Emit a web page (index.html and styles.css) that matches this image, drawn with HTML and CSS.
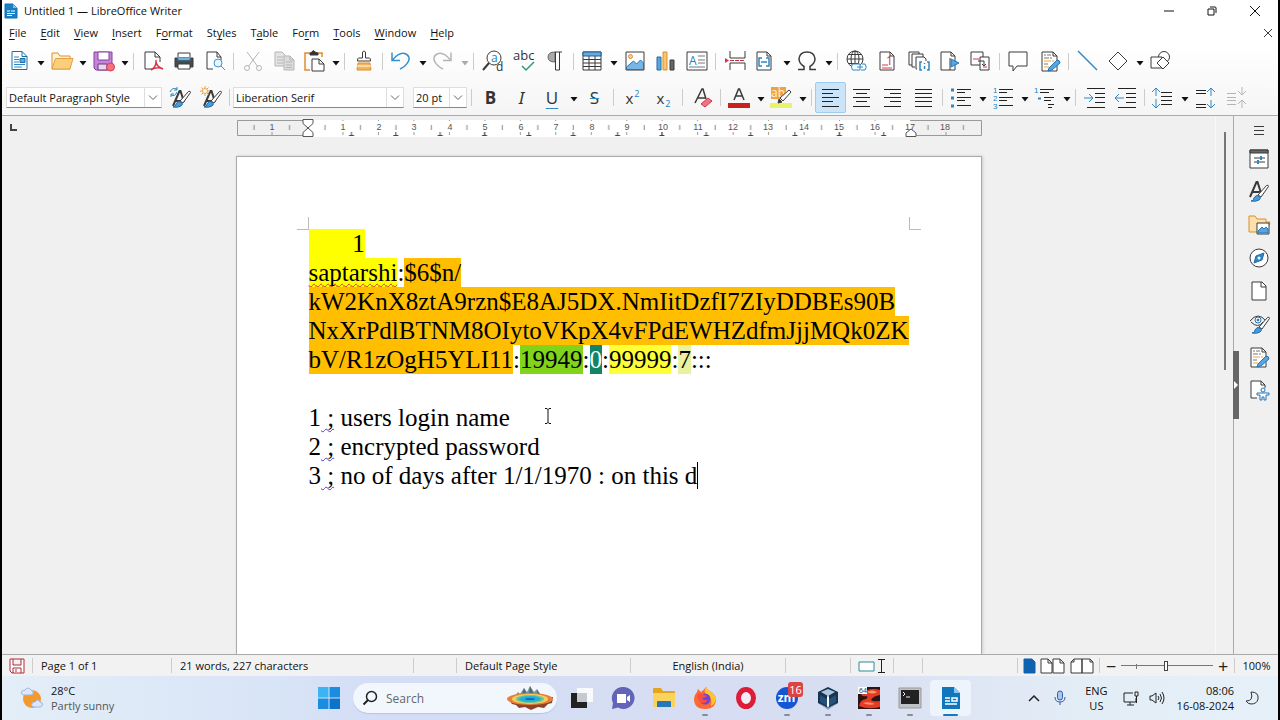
FILE: index.html
```html
<!DOCTYPE html>
<html lang="en">
<head>
<meta charset="utf-8">
<title>Untitled 1 — LibreOffice Writer</title>
<link rel="stylesheet" href="styles.css">
</head>
<body>
<svg class="defs" aria-hidden="true">
  <defs>
    <symbol id="arrow" viewBox="0 0 8 5"><path d="M0.5 0h7L4 4.5z" fill="currentColor" stroke="none"/></symbol>
    <symbol id="chev" viewBox="0 0 10 6"><path d="M1 1l4 4 4-4" stroke="#666"/></symbol>
    <symbol id="brush" viewBox="0 0 24 24">
      <path d="M11 15 19.500 5.500q2-1 2 1L14 17z" fill="#fff"/>
      <path d="M4 21q3 0 3-3 2-4 5-2 3 2 0 4-3 2-8 1z" fill="#4a9bd8" stroke="#1e6fae"/>
    </symbol>
    <symbol id="styleA" viewBox="0 0 24 24"><path d="M4 18 10.500 3h1L15 14M6.500 13h7" stroke-width="2"/></symbol>
    <symbol id="editdoc" viewBox="0 0 24 24">
      <path d="M4 3h11l4 4v15H4z" fill="#fff"/><path d="M15 3v4h4"/>
      <path d="M6 6h2m1 0h4M6 9h5m1 0h2M6 15h4" stroke="#777"/><path d="M6 12h7m1 0h2M6 18h5" stroke="#e8a33d"/>
      <path d="m11 19 8-8q3 0 3 3l-8 7-4 1z" fill="#5ba5df" stroke="#2375b9"/>
    </symbol>
  </defs>
</svg>
<div class="window">
  <header class="titlebar">
    <svg class="app-icon" viewBox="0 0 14 16"><path d="M1 1h8l4 4v10H1z" fill="#1681c4" stroke="#1173b5"/><path d="M9 1v4h4z" fill="#7cc3ee" stroke="none"/><path d="M3 8h3m1 0h4M3 10.500h8M3 12.500h5" stroke="#fff"/></svg>
    <h1>Untitled 1 — LibreOffice Writer</h1>
    <div class="window-buttons">
      <button aria-label="Minimize"><svg viewBox="0 0 12 12"><path d="M1 6h10"/></svg></button>
      <button aria-label="Restore"><svg viewBox="0 0 12 12"><path d="M2 4h6v6H2zM4 2h5q1 0 1 1v5"/></svg></button>
      <button aria-label="Close"><svg viewBox="0 0 12 12"><path d="m1 1 10 10M11 1 1 11"/></svg></button>
    </div>
  </header>

  <nav class="menubar">
    <button><u>F</u>ile</button><button><u>E</u>dit</button><button><u>V</u>iew</button><button><u>I</u>nsert</button><button>F<u>o</u>rmat</button><button>St<u>y</u>les</button><button>T<u>a</u>ble</button><button>Fo<u>r</u>m</button><button><u>T</u>ools</button><button><u>W</u>indow</button><button><u>H</u>elp</button>
    <button class="close-doc" aria-label="Close document"><svg viewBox="0 0 8 8"><path d="m0 0 8 8M8 0 0 8"/></svg></button>
  </nav>

  <div class="toolbar standard">
    <div class="split"><button aria-label="New"><svg viewBox="0 0 24 24"><path d="M5 2.500h10l5 5v13H5z" fill="#fff" stroke="#1c6ea4"/><path d="M15 2.500v5h5" stroke="#1c6ea4"/><path d="M7 8h5m-5 2.500h5M7 13h5m-5 2.500h11M7 18h8" stroke="#2d88c3"/><path d="M13 9.500h5v4h-5z" fill="#5aa8dc" stroke="#1c6ea4"/></svg></button><button class="drop" aria-label="New options"><svg><use href="#arrow"/></svg></button></div>
    <div class="split"><button aria-label="Open"><svg viewBox="0 0 24 24"><path d="M3 20V4h6l2 3h10v13z" fill="#fff3d6" stroke="#e08d2c"/><path d="M3 20 6.500 9.500H24L21 20z" fill="#f9cf7c" stroke="#e3a03f"/></svg></button><button class="drop" aria-label="Open options"><svg><use href="#arrow"/></svg></button></div>
    <div class="split"><button aria-label="Save"><svg viewBox="0 0 24 24"><path d="M3 3h18v18H5l-2-2z" fill="#c583dc" stroke="#85409b"/><path d="M7 3h11v8H7z" fill="#fff" stroke="#85409b"/><path d="M7 15h9v6H7z" fill="#e9d5ef" stroke="#6b3a7c"/><circle cx="19.500" cy="18" r="4" fill="#f27080" stroke="#d63d50"/></svg></button><button class="drop" aria-label="Save options"><svg><use href="#arrow"/></svg></button></div>
    <span class="sep"></span>
    <button aria-label="Export as PDF"><svg viewBox="0 0 24 24"><path d="M11 20H4V3h10l5 5v5" fill="#fff"/><path d="M14 3v5h5"/><path d="M10 21q5-3 5-8 0-3 0 0 1 5 7 7-6-3-12 1z" stroke="#d8344b" stroke-width="1.500"/></svg></button>
    <button aria-label="Print"><svg viewBox="0 0 24 24"><path d="M3 9h18v9H3z" fill="#4a4a4a"/><path d="M6 8V4h12v4" fill="#fff"/><path d="M6 9h12v2H6z" fill="#b8daf2" stroke="#2d88c3"/><path d="M6 15h12v5H6z" fill="#fff"/></svg></button>
    <button aria-label="Print preview"><svg viewBox="0 0 24 24"><path d="M10 20H4V3h10l4 5v3" fill="#fff"/><path d="M14 3v5h4"/><circle cx="15" cy="14" r="4" fill="#e9f5fc" stroke="#3f96cc"/><path d="m18 17 4 4" stroke="#3f96cc"/></svg></button>
    <span class="sep"></span>
    <button class="off" aria-label="Cut"><svg viewBox="0 0 24 24"><path d="M6 3 17 18M18 3 7 18"/><circle cx="6" cy="19" r="2.500"/><circle cx="18" cy="19" r="2.500"/></svg></button>
    <button class="off" aria-label="Copy"><svg viewBox="0 0 24 24"><path d="M3 3h7l3 3v11H3z" fill="#e4e4e4"/><path d="M5 8h6M5 11h6M5 14h6"/><path d="M12 7h6l4 4v10H12z" fill="#dcdcdc"/><path d="M18 7v4h4M14 13h6m-6 3h6m-6 2.500h6"/></svg></button>
    <div class="split"><button aria-label="Paste"><svg viewBox="0 0 24 24"><path d="M8 21H3V4h5m8 0h4v4" stroke="#e08d2c" stroke-width="1.500"/><path d="M8 6V4l2-1q1-3 3 0l3 1v2z" fill="#333"/><path d="M10 10h7l5 5v7H10z" fill="#fff"/><path d="M17 10v5h5"/></svg></button><button class="drop" aria-label="Paste options"><svg><use href="#arrow"/></svg></button></div>
    <span class="sep"></span>
    <button aria-label="Clone formatting"><svg viewBox="0 0 24 24"><path d="M10.500 9V3q1.500-2 3 0v6h4q1 0 1 3h-13q0-3 1-3z" fill="#fff"/><path d="M6 14h12l1 7H5z" fill="#f5b45a" stroke="#e08d2c"/><path d="M5 17h14" stroke="#fff"/></svg></button>
    <span class="sep"></span>
    <div class="split"><button aria-label="Undo"><svg viewBox="0 0 24 24"><path d="M3 3.500v8h8M3.500 11Q11 2 17 5q5 3 2 8-2 4-8 7" stroke="#348fce" stroke-width="1.500"/></svg></button><button class="drop" aria-label="Undo options"><svg><use href="#arrow"/></svg></button></div>
    <div class="split off"><button aria-label="Redo"><svg viewBox="0 0 24 24"><path d="M20 3.500v8h-8M19.500 11Q12 2 6 5q-5 3-2 8 2 4 8 7" stroke-width="1.500"/></svg></button><button class="drop" aria-label="Redo options"><svg><use href="#arrow"/></svg></button></div>
    <span class="sep"></span>
    <button aria-label="Find and replace"><svg viewBox="0 0 24 24"><circle cx="13" cy="9" r="7" fill="#fff"/><path d="m8 14-6 7" stroke-width="2"/><text x="10" y="13" class="glyph blue s12">a</text><text x="15" y="22" class="glyph s12">d</text></svg></button>
    <button aria-label="Spelling"><svg viewBox="0 0 24 24"><text x="1" y="11" class="glyph s13">abc</text><path d="m10 17 4 4 8-8" stroke="#2f9c6b" stroke-width="1.500"/></svg></button>
    <button aria-label="Formatting marks"><svg viewBox="0 0 24 24"><path d="M12 13Q5 13 5 8t7-5z" fill="#aaa" stroke="#666"/><path d="M12 3h7M12.500 3v18h4V3"/></svg></button>
    <span class="sep"></span>
    <div class="split"><button aria-label="Insert table"><svg viewBox="0 0 24 24"><path d="M3 3h18v18H3z" fill="#fff"/><path d="M3 3h18v4H3z" fill="#69a9dc" stroke="#1f5f94"/><path d="M3 10.500h18M3 14h18M3 17.500h18M9 7v14m6-14v14"/></svg></button><button class="drop" aria-label="Table options"><svg><use href="#arrow"/></svg></button></div>
    <button aria-label="Insert image"><svg viewBox="0 0 24 24"><path d="M3 3h18v18H3z" fill="#fff"/><circle cx="7.500" cy="7.500" r="2" fill="#fbd08a" stroke="#e08d2c"/><path d="m3.500 18 7-6 3 3 4-4 3 3v6.500h-17z" fill="#76b6e6" stroke="#2375b9"/></svg></button>
    <button aria-label="Insert chart"><svg viewBox="0 0 24 24"><path d="M3 8h4v13H3z" fill="#5ba5df" stroke="#1f6cab"/><path d="M9 3h4v18H9z" fill="#fbc56e" stroke="#d98f30"/><path d="M16 11h4v10h-4z" fill="#666"/></svg></button>
    <button aria-label="Insert text box"><svg viewBox="0 0 24 24"><path d="M2 3h20v18H2z" fill="#fff"/><text x="4" y="16" class="glyph blue s12">A</text><path d="M13 7h7m-7 4h7m-7 3h7M4 18h16" stroke="#777"/></svg></button>
    <span class="sep"></span>
    <button aria-label="Page break"><svg viewBox="0 0 24 24"><path d="M7 2v7h15V2M7 21v-7h15v7" fill="#fff"/><path d="M7 11.500h15" stroke="#c2303d" stroke-dasharray="4 1"/><path d="m2 9 4 2.500L2 14z" fill="#d8344b" stroke="none"/></svg></button>
    <div class="split"><button aria-label="Insert field"><svg viewBox="0 0 24 24"><path d="M4 3h10l4 4v14H4z" fill="#fff"/><path d="M14 3v4h4"/><path d="M9 9H6v8h3m4-8h3v8h-3m-5-4h6" stroke="#2d88c3" stroke-width="1.500"/></svg></button><button class="drop" aria-label="Field options"><svg><use href="#arrow"/></svg></button></div>
    <div class="split"><button aria-label="Special character"><svg viewBox="0 0 24 24"><path d="M3 20.500h6v-3q-5-3-5-8Q5 3 12 3t8 6.500q0 5-5 8v3h6" stroke-width="1.500"/></svg></button><button class="drop" aria-label="Character options"><svg><use href="#arrow"/></svg></button></div>
    <span class="sep"></span>
    <button aria-label="Hyperlink"><svg viewBox="0 0 24 24"><circle cx="10" cy="10" r="8" fill="#fff"/><path d="M2 10h16M10 2v16M4 5.500h12M4 14.500h9"/><ellipse cx="10" cy="10" rx="4" ry="8"/><path d="M10 15h5v6H7.500q-2-3 0-6zm7 0h3q2.500 3 0 6h-4m-4-3h6" fill="#fff" stroke="#2d88c3"/></svg></button>
    <button aria-label="Footnote"><svg viewBox="0 0 24 24"><path d="M4 3h10l4 4v14H4z" fill="#fff"/><path d="M14 3v4h4"/><path d="M6 16h6M6 19h10" stroke="#d8344b"/><text x="10" y="16" class="glyph red s12">1</text></svg></button>
    <button aria-label="Index entry"><svg viewBox="0 0 24 24"><path d="M5 16H2V3h10v2M8 18H5V5h11v3m-6 12H9V8h8l2 2v2"/><path d="M15 13h-2v8h2m5-8h2v8h-2m-2.500-4v3m0-6v1" stroke="#2d88c3" stroke-width="1.500"/></svg></button>
    <button aria-label="Bookmark"><svg viewBox="0 0 24 24"><path d="M3 3h10l4 4v14H3z" fill="#fff"/><path d="M13 3v4h4M12 9v12"/><path d="m13 10 8 4-8 4z" fill="#5ba5df" stroke="#2375b9"/></svg></button>
    <button aria-label="Cross-reference"><svg viewBox="0 0 24 24"><path d="M2 3h12v13H2z" fill="#fff"/><path d="M11 8h9v13h-9z" fill="#fff"/><path d="M4 10h6m4 8h4" stroke="#d8344b"/><path d="M9 12h6v4m-2-1 2 2 2-2"/></svg></button>
    <span class="sep"></span>
    <button aria-label="Comment"><svg viewBox="0 0 24 24"><path d="M2 3h18v14H10l-4 5v-5H2z" fill="#fff"/></svg></button>
    <button aria-label="Track changes"><svg><use href="#editdoc"/></svg></button>
    <span class="sep"></span>
    <button aria-label="Line"><svg viewBox="0 0 24 24"><path d="m2 2 19 19" stroke="#2d88c3" stroke-width="1.500"/></svg></button>
    <div class="split"><button aria-label="Basic shapes"><svg viewBox="0 0 24 24"><path d="m12 3 9 9-9 9-9-9z" fill="#fff"/></svg></button><button class="drop" aria-label="Shape options"><svg><use href="#arrow"/></svg></button></div>
    <button aria-label="Show draw functions"><svg viewBox="0 0 24 24"><circle cx="15" cy="8" r="5.500" fill="#fff"/><path d="M2 8h11v11H2z" fill="#fff"/><path d="m14 8 6 6-6 6-6-6z" fill="#fff"/></svg></button>
  </div>

  <div class="toolbar formatting">
    <div class="combo style"><select aria-label="Paragraph style"><option>Default Paragraph Style</option></select><svg><use href="#chev"/></svg></div>
    <button aria-label="Update style"><svg viewBox="0 0 24 24"><use href="#styleA" x="1" y="2"/><use href="#brush" x="1"/><path d="M2 6q2-5 7-3m0-2v3H6M9 6q-2 5-6 3m0 2V8h3" stroke="#2d88c3"/></svg></button>
    <button aria-label="New style"><svg viewBox="0 0 24 24"><use href="#styleA" x="1" y="2"/><use href="#brush" x="1"/><circle cx="6" cy="5" r="2.500" fill="#fff" stroke="#e8a33d"/><path d="M6 0v2m0 6v2M1 5h2m6 0h2M2.500 1.500 4 3m4 4 1.500 1.500M9.500 1.500 8 3M4 7 2.500 8.500" stroke="#e8a33d"/></svg></button>
    <span class="sep"></span>
    <div class="combo font"><select aria-label="Font name"><option>Liberation Serif</option></select><svg><use href="#chev"/></svg></div>
    <div class="combo size"><select aria-label="Font size"><option>20 pt</option></select><svg><use href="#chev"/></svg></div>
    <span class="sep"></span>
    <button class="char bold">B</button>
    <button class="char italic">I</button>
    <div class="split"><button class="char under">U</button><button class="drop" aria-label="Underline options"><svg><use href="#arrow"/></svg></button></div>
    <button class="char strike">S</button>
    <span class="sep"></span>
    <button class="char script" aria-label="Superscript">x<sup>2</sup></button>
    <button class="char script" aria-label="Subscript">x<sub>2</sub></button>
    <span class="sep"></span>
    <button aria-label="Clear formatting"><svg viewBox="0 0 24 24"><path d="M5 17 12 3h1l3 10M8 12h7" stroke-width="1.500"/><path d="m11 18 7-6 4 3-7 6z" fill="#ef7581" stroke="#d8344b"/></svg></button>
    <span class="sep"></span>
    <div class="split"><button aria-label="Font colour"><svg viewBox="0 0 24 24"><path d="m7 14 4.500-11h1L17 14M9 10h6" stroke-width="1.500"/><path d="M1 17h22v5H1z" fill="#c9211e" stroke="none"/></svg></button><button class="drop" aria-label="Font colour options"><svg><use href="#arrow"/></svg></button></div>
    <div class="split"><button aria-label="Highlighting"><svg viewBox="0 0 24 24"><path d="M2 1h15v12H2z" fill="#f2a13c" stroke="none"/><text x="2" y="11" class="glyph pale s12">ab</text><path d="M1 17h22v5H1z" fill="#e8f26b" stroke="none"/><path d="M11 12 20 4l2 2-8 9z" fill="#fff"/><path d="m10 13 3 3-4 1z" fill="#333"/></svg></button><button class="drop" aria-label="Highlighting options"><svg><use href="#arrow"/></svg></button></div>
    <span class="sep"></span>
    <button class="pressed" aria-label="Align left"><svg class="bars" viewBox="0 0 24 24"><path d="M3 3.500h17M3 7.500h11M3 11.500h17M3 15.500h11M3 20.500h17"/></svg></button>
    <button aria-label="Align centre"><svg class="bars" viewBox="0 0 24 24"><path d="M3 3.500h17M6 7.500h11M3 11.500h17M6 15.500h11M3 20.500h17"/></svg></button>
    <button aria-label="Align right"><svg class="bars" viewBox="0 0 24 24"><path d="M3 3.500h17M9 7.500h11M3 11.500h17M9 15.500h11M3 20.500h17"/></svg></button>
    <button aria-label="Justify"><svg class="bars" viewBox="0 0 24 24"><path d="M3 3.500h17M3 7.500h17M3 11.500h17M3 15.500h17M3 20.500h17"/></svg></button>
    <span class="sep"></span>
    <div class="split"><button aria-label="Bullets"><svg class="bars" viewBox="0 0 24 24"><path d="M8 3.500h14M8 6.500h8M8 11.500h14M8 14.500h8M8 19.500h14"/><path d="M2 4h3M2 12h3M2 20h3" stroke="#2d88c3" stroke-width="3"/></svg></button><button class="drop" aria-label="Bullet options"><svg><use href="#arrow"/></svg></button></div>
    <div class="split"><button aria-label="Numbering"><svg class="bars" viewBox="0 0 24 24"><path d="M8 3.500h14M8 6.500h8M8 11.500h14M8 14.500h8M8 19.500h14"/><text x="2" y="7" class="glyph blue digit">1</text><text x="2" y="15" class="glyph blue digit">2</text><text x="2" y="23" class="glyph blue digit">3</text></svg></button><button class="drop" aria-label="Numbering options"><svg><use href="#arrow"/></svg></button></div>
    <div class="split"><button aria-label="Outline"><svg class="bars" viewBox="0 0 24 24"><path d="M7 3.500h14M7 6.500h9M11 11.500h10M11 14.500h7M15 18.500h6M15 21.500h4"/><text x="1" y="7" class="glyph blue digit">1</text><path d="M5 12.500h3" stroke="#2d88c3" stroke-width="2"/></svg></button><button class="drop" aria-label="Outline options"><svg><use href="#arrow"/></svg></button></div>
    <span class="sep"></span>
    <button aria-label="Increase indent"><svg class="bars" viewBox="0 0 24 24"><path d="M4 2.500h18M12 7.500h10M12 11.500h10M12 16.500h10M4 21.500h18"/><path d="M1 12h9M6 8l4 4-4 4" stroke="#2d88c3"/></svg></button>
    <button aria-label="Decrease indent"><svg class="bars" viewBox="0 0 24 24"><path d="M4 2.500h18M12 7.500h10M12 11.500h10M12 16.500h10M4 21.500h18"/><path d="M1 12h9M5 8l-4 4 4 4" stroke="#2d88c3"/></svg></button>
    <span class="sep"></span>
    <div class="split"><button aria-label="Line spacing"><svg class="bars" viewBox="0 0 24 24"><path d="M10 6.500h11M10 10.500h11M10 14.500h11M10 18.500h11"/><path d="M5 2v8M1 6l4-4 4 4M5 13v9m-4-4 4 4 4-4" stroke="#2d88c3"/></svg></button><button class="drop" aria-label="Spacing options"><svg><use href="#arrow"/></svg></button></div>
    <button aria-label="Increase paragraph spacing"><svg class="bars" viewBox="0 0 24 24"><path d="M2 4.500h10M2 7.500h10M2 18.500h10M2 21.500h10"/><path d="M17 2v8m-4-4 4-4 4 4m-4 8v8m-4-4 4 4 4-4" stroke="#2d88c3"/></svg></button>
    <button class="off" aria-label="Decrease paragraph spacing"><svg class="bars" viewBox="0 0 24 24"><path d="M2 7.500h9M2 11.500h9M2 14.500h9M2 18.500h9M17 1v8m-4-4 4 4 4-4m-4 9v8m-4-4 4-4 4 4"/></svg></button>
  </div>

  <main class="workspace">
    <div class="canvas">
      <svg class="tab-kind" viewBox="0 0 8 8"><path d="M1 0v6h6" stroke="#444" stroke-width="2"/></svg>
      <svg class="ruler" viewBox="0 0 746 20">
        <defs>
          <pattern id="half" x="71" width="35.470" height="20" patternUnits="userSpaceOnUse"><path d="M18 7v5" stroke="#888"/><path d="M0.500 0v3M0.500 14v3" stroke="#999"/></pattern>
          <pattern id="stops" x="93" y="14" width="44.350" height="6" patternUnits="userSpaceOnUse"><path d="M20 3.500h5M22.500 0v3" stroke="#444"/></pattern>
        </defs>
        <path d="M1.500 2.500h744v15H1.500z" fill="#f0f0f0" stroke="#999"/>
        <path d="M72 2h603v17H72z" fill="#fff" stroke="none"/>
        <path d="M2 2h742v16H2z" fill="url(#half)" stroke="none"/>
        <path d="M76 14h594v5H76z" fill="url(#stops)" stroke="none"/>
        <g class="numbers">
          <text x="36" y="12">1</text><text x="107" y="12">1</text><text x="143" y="12">2</text><text x="178" y="12">3</text><text x="214" y="12">4</text><text x="249" y="12">5</text><text x="285" y="12">6</text><text x="320" y="12">7</text><text x="356" y="12">8</text><text x="391" y="12">9</text><text x="427" y="12">10</text><text x="462" y="12">11</text><text x="497" y="12">12</text><text x="532" y="12">13</text><text x="568" y="12">14</text><text x="603" y="12">15</text><text x="639" y="12">16</text><text x="674" y="12">17</text><text x="709" y="12">18</text>
        </g>
        <path d="M67 1.500h10v4l-5 4.500 5 4.500v4H67v-4l5-4.500-5-4.500zM675 11l5 4v3.500h-10V15z" fill="#fff" stroke="#555"/>
      </svg>
      <article class="page">
        <span class="crop left"></span><span class="crop right"></span>
        <p><mark class="yellow">       1</mark></p>
        <p><mark class="yellow"><span class="misspelt">saptarshi</span></mark>:<mark class="orange">$6$n/<br>kW2KnX8ztA9rzn$E8AJ5DX.NmIitDzfI7ZIyDDBEs90B<br>NxXrPdlBTNM8OIytoVKpX4vFPdEWHZdfmJjjMQk0ZK<br>bV/R1zOgH5YLI11</mark>:<mark class="green">19949</mark>:<mark class="teal">0</mark>:<mark class="lemon">99999</mark>:<mark class="lime">7</mark>:::</p>
        <p><br></p>
        <p>1<span class="grammar"> ;</span> users login name</p>
        <p>2<span class="grammar"> ;</span> encrypted password</p>
        <p>3<span class="grammar"> ;</span> no of days after 1/1/1970 : on this d<span class="caret"></span></p>
        <svg class="pointer" viewBox="0 0 8 16"><path d="M1 0.500h2l1 1 1-1h2M4 1v14M1 15.500h2l1-1 1 1h2" stroke="#111"/></svg>
      </article>
    </div>
    <div class="scroll"><span></span></div>
    <aside class="sidebar">
      <button class="grip" aria-label="Collapse sidebar"><svg viewBox="0 0 6 8"><path d="M1 0l4 4-4 4z" fill="#fff" stroke="none"/></svg></button>
      <button class="settings" aria-label="Sidebar settings"><svg viewBox="0 0 24 24"><path d="M7 8.500h10M7 12.500h10M7 16.500h10"/></svg></button>
      <button aria-label="Properties"><svg viewBox="0 0 24 24"><path d="M3 3h18v18H3z" fill="#fff"/><path d="M3 3h18v3H3z" fill="#666"/><path d="M7 11h11M7 15h11"/><path d="M14 9v4m-3 0v4" stroke="#2d88c3" stroke-width="2"/></svg></button>
      <button aria-label="Styles"><svg viewBox="0 0 24 24"><use href="#styleA" x="-1" y="-1"/><use href="#brush"/></svg></button>
      <button aria-label="Gallery"><svg viewBox="0 0 24 24"><path d="M2 19V3h6l2 3h9v3h4l-3 10z" fill="#fbe0ab" stroke="#e08d2c"/><path d="M10 10h12v11H10z" fill="#fff"/><path d="m11 18 4-4 2 2 2-2 2 2v4H11z" fill="#5ba5df" stroke="#2375b9"/></svg></button>
      <button aria-label="Navigator"><svg viewBox="0 0 24 24"><circle cx="12" cy="12" r="9" fill="#fff"/><path d="M17 7 15 14l-8 3 2-7z" fill="#2d88c3" stroke="#1f6cab"/><circle cx="12" cy="12" r="1.500" fill="#fff" stroke="none"/></svg></button>
      <button aria-label="Page"><svg viewBox="0 0 24 24"><path d="M5 3h10l4 4v14H5z" fill="#fff"/><path d="M14 3v5h5"/></svg></button>
      <button aria-label="Style inspector"><svg viewBox="0 0 24 24"><path d="M3 9q8-10 16 0M4 10q7 7 12 0"/><circle cx="11" cy="8" r="3" fill="#fff" stroke="#2375b9"/><circle cx="11" cy="8" r="1" fill="#2375b9" stroke="#2375b9"/><use href="#brush" x="1"/></svg></button>
      <button aria-label="Manage changes"><svg><use href="#editdoc"/></svg></button>
      <button aria-label="Accessibility check"><svg viewBox="0 0 24 24"><path d="M10 20H4V3h10l4 4v3" fill="#fff"/><path d="M14 3v4h4"/><circle cx="16" cy="12" r="2" fill="#fff" stroke="#2375b9"/><path d="M10 15h12v2h-3v5h-2v-3h-2v3h-2v-5h-3z" fill="#fff" stroke="#2375b9"/></svg></button>
    </aside>
  </main>

  <footer class="statusbar">
    <span class="mid"><svg class="save-state" viewBox="0 0 16 16"><path d="M1 1h14v14H3l-2-2zM4 1v6h8V1M4 15v-5h8v5M7 11v3" stroke="#b02a37" fill="#fff"/></svg></span>
    <span>Page 1 of 1</span>
    <span>21 words, 227 characters</span>
    <span></span>
    <span>Default Page Style</span>
    <span class="mid">English (India)</span>
    <span></span>
    <span class="mid"><svg class="insert-state" viewBox="0 0 28 16"><path d="M1 4h15v9H1z" fill="#fff" stroke="#2b8a9c"/><path d="M20 1.500h7M23.500 1v14M20 14.500h7" stroke="#222"/></svg></span>
    <span></span>
    <span></span>
    <span class="mid views"><svg viewBox="0 0 72 16"><path d="M1 1h8l3 3v11H1z" fill="#0d63b0" stroke="#0d63b0"/><path d="M18 1h7l4 4v10H18zM30 1h7l4 4v10H30zM25 1v4h4M37 1v4h4M51 1h8v14H48V4zM59 1h8l3 3v11H59zM51 1v3h-3M67 1v3h3" fill="#fff"/></svg></span>
    <span class="mid zoom"><button aria-label="Zoom out">−</button><input type="range" min="0" max="100" value="49" aria-label="Zoom"><button aria-label="Zoom in">+</button></span>
    <span class="mid">100%</span>
  </footer>

  <div class="taskbar">
    <div class="weather">
      <svg viewBox="0 0 24 24"><circle cx="12" cy="13" r="9" fill="#f39a2e" stroke="none"/><path d="M3 9q-3-1-1-4 2-1 3-1 3-4 6 0 3 0 2 4-1 1-3 1zM13 21q-3-2 0-5 1 0 2 0 3-4 5 0 4 1 2 4-1 1-3 1z" fill="#dbe7fa" stroke="#9db5dd"/></svg>
      <div><strong>28°C</strong><span>Partly sunny</span></div>
    </div>
    <div class="apps">
      <button aria-label="Start"><svg viewBox="0 0 24 24"><g stroke="none" fill="#1a8de0"><path d="M1 1h10.500v10.500H1z" fill="#3bb5ef"/><path d="M12.500 1H23v10.500H12.500zM1 12.500h10.500V23H1z"/><path d="M12.500 12.500H23V23H12.500z" fill="#0d72c9"/></g></svg></button>
      <label class="search"><svg viewBox="0 0 16 16"><circle cx="9.500" cy="6.500" r="5" stroke="#222" stroke-width="1.500"/><path d="m6 10-4.500 4.500" stroke="#222" stroke-width="2"/></svg><input type="text" placeholder="Search" aria-label="Search"><svg class="spring" viewBox="0 0 48 24"><g stroke="none"><path d="M8 11 12 6l2 2 4-6 3 4 3-6 4 6 3-3 4 6 5 1v5H8z" fill="#7d939d"/><path d="M18 2 21 9H16zM24 0 28 9h-5zM31 4l4 6h-4z" fill="#4f6875"/><path d="M1 12 6 18l4 1 3 3 6-1 6 3 7-3 6 1 4-4 4-1 1-6z" fill="#8b4429"/><ellipse cx="24" cy="13" rx="23" ry="6" fill="#e8803c"/><ellipse cx="24" cy="13" rx="18" ry="5" fill="#f2cf56"/><ellipse cx="24" cy="13" rx="14" ry="4" fill="#63c994"/><ellipse cx="24" cy="13" rx="11" ry="3" fill="#24aee0"/><ellipse cx="24" cy="13" rx="5" ry="1" fill="#1668b8"/></g></svg></label>
      <button aria-label="Task view"><svg viewBox="0 0 24 24"><g stroke="none"><path d="M7 2h16v14H7z" fill="#f8fafc"/><path d="M1 7h16v15H1z" fill="#222"/><path d="M7 7h10v9H7z" fill="#c5cad0"/></g></svg></button>
      <button aria-label="Chat"><svg viewBox="0 0 24 24"><g stroke="none"><path d="M12 1a11 11 0 1 1-5 20.500L1 23l1-6A11 11 0 0 1 12 1z" fill="#6264b8"/><path d="M6 8h9v9H6zM16 11l3-2v7l-3-2z" fill="#fff"/></g></svg></button>
      <button aria-label="File Explorer"><svg viewBox="0 0 24 24"><g stroke="none"><path d="M1 3q0-1 1-1h7l2 3h11q1 0 1 1v14H1z" fill="#e2a51e"/><path d="M1 7h22v14H1z" fill="#fbd35c"/><path d="M5 16q0-1 1-1h12q1 0 1 1v5H5z" fill="#2477b8"/></g></svg></button>
      <button class="running" aria-label="Firefox"><svg viewBox="0 0 24 24"><g stroke="none"><path d="M4 6 5 3l3 3q2-1 5-5 1 3 4 4 5 3 6 8 0 10-11 10T1 13q0-4 3-7z" fill="#fb6a35"/><path d="M13 1q1 3 4 4 5 3 6 8-1 5-5 7 2-8-4-11-4-3-1-8z" fill="#ffc52d"/><circle cx="12" cy="13" r="5.500" fill="#7542d6"/><path d="M5 8q3-2 6 1l3 1q-2 2-5 2 1 3 6 2-3 5-8 2-4-4-2-8z" fill="#f9513b"/></g></svg></button>
      <button aria-label="Opera"><svg viewBox="0 0 24 24"><ellipse cx="12" cy="12" rx="7.500" ry="8.500" fill="#f1edf6" stroke="#dd1c38" stroke-width="5"/></svg></button>
      <button class="running zoom-app" aria-label="Zoom"><svg viewBox="0 0 24 24"><circle cx="12" cy="12" r="11" fill="#1456d4" stroke="none"/></svg><span class="zm">zm</span><span class="badge">16</span></button>
      <button class="running" aria-label="VirtualBox"><svg viewBox="0 0 24 24"><g stroke="none"><path d="m12 1 10 5v11l-10 6-10-6V6z" fill="#19334e"/><path d="m12 3 7 3-7 4-7-4z" fill="#aac8df"/><path d="m4 9 7 4v7l-7-4zM20 9l-7 4v7l7-4z" fill="#24507a"/><path d="m12 9 1 2v9l-1 2-1-2v-9z" fill="#fff"/><path d="m3 17 9 5 9-5-9 7z" fill="#8da9c4"/></g></svg></button>
      <button class="running" aria-label="MobaXterm"><svg viewBox="0 0 24 24"><g stroke="none"><path d="M1 1h22v22H1z" fill="#2b1514"/><path d="M4 8q8-7 19-4v5q-7 1-9 5 2 2 9 1v6q-12 3-21-1 1-6 7-7 3-2 0-3-4 1-5-2z" fill="#e53a23"/><path d="M10 6q5-3 10 0-4 3-10 0zM6 17q6-2 12 1-6 2-12-1z" fill="#ff936c"/><path d="M1 1h9v7H1z" fill="#fff"/></g><text x="2" y="7" class="glyph s7">64</text></svg></button>
      <button class="running" aria-label="Terminal"><svg viewBox="0 0 24 24"><path d="M1 2h22v20H1z" fill="#bfc3c7" stroke="#999"/><path d="M3 4h18v14H3z" fill="#222" stroke="none"/><path d="m5 6 2 2-2 2m3 1h4" stroke="#eee"/></svg></button>
      <button class="running active" aria-label="LibreOffice Writer"><svg viewBox="0 0 24 24"><g stroke="none"><path d="M3 1h12l6 6v16H3z" fill="#1276bd"/><path d="M15 1v6h6z" fill="#86c9f3"/></g><path d="M6 12h5m-5 3h5m2-3h5v3h-5zM6 18h12" stroke="#fff" stroke-width="1.500"/></svg></button>
    </div>
    <div class="tray">
      <button aria-label="Hidden icons"><svg viewBox="0 0 16 16"><path d="m3 11 5-5 5 5" stroke="#222" stroke-width="1.500"/></svg></button>
      <button aria-label="Microphone"><svg viewBox="0 0 16 16"><rect x="5.500" y="1" width="5" height="9" rx="2.500" fill="#a8c7ee" stroke="#315aa8"/><path d="M3 7q0 5 5 5t5-5M8 12v3" stroke="#315aa8"/></svg></button>
      <button class="lang">ENG<br>US</button>
      <button aria-label="Network"><svg viewBox="0 0 16 16"><path d="M10 3H1v9h12V8M4 15h7m-4-3v3M12 2h3v4h-3zM13.500 6v7" stroke="#222"/></svg></button>
      <button aria-label="Volume"><svg viewBox="0 0 16 16"><path d="M1 6v4h2l4 3V3L3 6zM9 6q2 2 0 4m2-6q3 4 0 8m2-10q4 6 0 12" stroke="#222"/></svg></button>
      <button class="clock">08:06<br>16-08-2024</button>
      <button aria-label="Do not disturb"><svg viewBox="0 0 16 16"><path d="M7 2q8 0 7 7-1 5-7 5-3 0-5-3 8 0 5-9z" stroke="#333"/></svg></button>
    </div>
  </div>
</div>
</body>
</html>
```
FILE: styles.css
```css
* { box-sizing: border-box; }
body { margin: 0; font: 11px/14px "Open Sans", "Noto Sans", sans-serif; color: #111; }
button, select, input { font: inherit; color: inherit; border: 0; background: none; padding: 0; margin: 0; }
svg { fill: none; stroke: #3a3a3a; display: block; flex: none; }
.defs { position: absolute; width: 0; height: 0; }

.window { display: flex; flex-direction: column; height: 100vh; overflow: hidden; background: linear-gradient(#fff 0, #fff 44px, #f5f5f5 115px); border: solid #000; border-width: 0 2px; }

.titlebar { display: flex; align-items: center; height: 22px; padding-left: 2px; gap: 6px; flex: none; }
.app-icon { width: 14px; height: 16px; }
.titlebar h1 { margin: 0; font-size: 11px; font-weight: 400; }
.window-buttons { display: flex; margin: 0 2px 0 auto; }
.window-buttons button { width: 43px; height: 20px; display: grid; place-items: center; }
.window-buttons svg { width: 12px; height: 12px; stroke: #111; }

.menubar { display: flex; align-items: center; height: 22px; padding-left: 7px; gap: 14px; flex: none; }
.menubar button { line-height: 18px; }
.menubar u { text-underline-offset: 2px; }
.menubar .close-doc { margin: 0 6px 0 auto; }
.close-doc svg { width: 8px; height: 8px; }

.toolbar { display: flex; align-items: center; flex: none; padding-left: 2px; }
.standard { height: 34px; }
.formatting { height: 38px; padding: 2px 0 0 4px; border-bottom: 1px solid #aaa; }
.toolbar button { width: 31px; height: 31px; display: grid; place-items: center; flex: none; }
.toolbar svg { width: 24px; height: 24px; overflow: visible; }
.toolbar .sep { width: 1px; height: 17px; margin: 0 3px; background: #ccc; flex: none; }
.split { display: flex; flex: none; }
.toolbar .split button { width: 30px; }
.toolbar .split .drop { width: 12px; padding: 4px 0 0 2px; color: #111; }
.toolbar .drop svg { width: 8px; height: 5px; }
.off svg { stroke: #b5b5b5; }
.toolbar .off .drop { color: #aaa; }
.toolbar .pressed { background: #cce4f7; border: 1px solid #9fcbee; border-radius: 2px; }
.bars { stroke: #222; }
.glyph { fill: #333; stroke: none; font-family: "Open Sans", sans-serif; }
.blue { fill: #2382bf; }
.red { fill: #cf2e43; }
.pale { fill: #fff0d8; }
.s7 { font-size: 7px; }
.s12 { font-size: 12px; }
.s13 { font-size: 13px; }
.digit { font: 8px "Liberation Sans", sans-serif; }

.combo { display: grid; grid-template-columns: 1fr 17px; height: 21px; align-items: center; background: #fff; border: 1px solid #ddd; border-bottom-color: #888; flex: none; }
.combo select { grid-area: 1 / 1 / 2 / 3; appearance: none; width: 100%; height: 19px; padding-left: 2px; outline: 0; }
.combo svg { grid-area: 1 / 2; width: 17px; height: 19px; padding: 6px 3px; border-left: 1px solid #ddd; pointer-events: none; }
.style { width: 156px; margin-right: 2px; }
.font { width: 171px; margin-right: 9px; }
.size { width: 54px; margin-right: 1px; }
.toolbar .char { font-size: 17px; line-height: 24px; color: #333; }
.toolbar .bold { font-weight: 700; }
.toolbar .italic { font-family: "Noto Sans", sans-serif; font-style: italic; }
.toolbar .under { text-decoration: underline #2d88c3 1px; text-underline-offset: 4px; }
.toolbar .strike { text-decoration: line-through #2d88c3 1px; }
.toolbar .script { display: flex; justify-content: center; align-items: center; gap: 1px; font-size: 15px; }
.script sup, .script sub { font-size: 9px; line-height: 10px; color: #2382bf; vertical-align: baseline; }
.script sup { padding-bottom: 7px; }
.script sub { padding-top: 12px; }

.workspace { display: flex; flex: 1; min-height: 0; background: #f0f0f0; border-bottom: 1px solid #aaa; }
.canvas { flex: 1; min-width: 0; min-height: 0; overflow: hidden; display: grid; grid-template-columns: 1fr 746px 1fr; grid-template-rows: 40px minmax(0, 1fr); }
.tab-kind { width: 8px; height: 8px; margin: 8px 0 0 8px; }
.ruler { width: 746px; height: 20px; margin-top: 2px; }
.numbers text { font: 9px "Liberation Sans", sans-serif; fill: #555; stroke: none; text-anchor: middle; }
.page { grid-column: 2; position: relative; padding: 72px 0 0 72px; background: #fff; border: solid #aaa; border-width: 1px 1px 0; box-shadow: 1px 0 3px #ccc; font: 25px/29px "Liberation Serif", serif; color: #000; }
.page p { margin: 0; white-space: pre; }
.page mark { color: inherit; padding: 1px 0; }
.page .yellow { background: #ff0; }
.page .orange { background: #ffbf00; }
.page .green { background: #81d41a; }
.page .teal { background: #158466; color: #fff; }
.page .lemon { background: #ffff38; }
.page .lime { background: #e8f2a1; }
.misspelt { text-decoration: underline wavy #c33 1px; text-underline-offset: 2px; text-decoration-skip-ink: none; }
.grammar { text-decoration: underline wavy #4a3fc0 1px; text-underline-offset: 2px; text-decoration-skip-ink: none; }
.caret { display: inline-block; width: 1px; height: 27px; background: #000; vertical-align: -5px; }
.crop { position: absolute; top: 60px; width: 12px; height: 13px; border: solid #bbb; border-width: 0 1px 1px 0; }
.crop.left { left: 60px; }
.crop.right { right: 60px; border-width: 0 0 1px 1px; }
.pointer { position: absolute; left: 307px; top: 251px; width: 8px; height: 16px; }
.scroll { width: 18px; border-left: 1px solid #f8f8f8; padding: 16px 8px; }
.scroll span { display: block; width: 2px; height: 238px; background: #777; }
.sidebar { position: relative; width: 45px; border-left: 1px solid #aaa; padding: 2px 0 0 6px; display: flex; flex-direction: column; align-items: center; gap: 9px; }
.sidebar svg { width: 24px; height: 24px; }
.sidebar .settings { height: 20px; }
.sidebar .grip { position: absolute; left: -1px; top: 235px; width: 6px; height: 68px; background: #666; }
.sidebar .grip svg { width: 6px; height: 8px; }

.statusbar { display: grid; grid-template-columns: 30fr 139fr 242fr 43fr 174fr 155fr 65fr 43fr 29fr 95fr 82fr 135fr 44fr; height: 21px; flex: none; align-items: center; background: #f2f2f2; white-space: nowrap; }
.statusbar > span { min-width: 0; height: 15px; line-height: 16px; padding-left: 8px; border-left: 1px solid #ccc; }
.statusbar > span:first-child { border: 0; }
.statusbar > .mid { padding: 0; display: flex; align-items: center; justify-content: center; }
.save-state { width: 16px; height: 16px; }
.insert-state { width: 28px; height: 16px; }
.views svg { width: 72px; height: 16px; }
.zoom { gap: 5px; }
.zoom button { font-size: 18px; line-height: 14px; width: 10px; color: #222; }
.zoom input { appearance: none; width: 92px; height: 14px; background: linear-gradient(#777, #777) center / 100% 1px no-repeat, linear-gradient(#777, #777) 15px 5px / 1px 5px no-repeat; }
.zoom input::-webkit-slider-thumb { appearance: none; width: 4px; height: 10px; background: #fff; border: 1px solid #444; }

.taskbar { display: flex; align-items: center; height: 44px; flex: none; background: linear-gradient(90deg, #e3eef8 0, #d9e5f7 20%, #d3ddf6 30%, #d8def1 65%, #e3edf6 85%, #e6f0f8); font-size: 11px; line-height: 15px; }
.weather { display: flex; align-items: center; gap: 7px; width: 308px; padding-left: 18px; }
.weather svg { width: 24px; height: 24px; }
.weather strong { display: block; font-weight: 400; }
.weather span { color: #555; }
.apps { display: flex; align-items: center; }
.apps button { position: relative; display: grid; place-items: center; width: 41px; height: 36px; }
.apps > button:first-child { width: 38px; }
.apps svg { width: 24px; height: 24px; }
.search { display: flex; align-items: center; width: 204px; height: 30px; margin: 0 4px 0 5px; padding: 0 3px 0 9px; gap: 8px; border-radius: 15px; background: #f2f6fd; box-shadow: 0 1px 1px #bbc4dc; }
.search svg { width: 16px; height: 16px; }
.search .spring { width: 48px; height: 24px; }
.search input { flex: 1; min-width: 0; font-size: 12px; outline: 0; }
.search input::placeholder { color: #666; opacity: 1; }
.running::after { content: ""; position: absolute; bottom: 0; width: 6px; height: 2px; border-radius: 1px; background: #888b98; }
.active { background: #eef4fc; border-radius: 4px; }
.active::after { width: 15px; background: #1479c4; }
.zm { position: absolute; font: 700 12px/14px "Open Sans", sans-serif; color: #fff; }
.badge { position: absolute; top: 2px; left: 22px; width: 15px; height: 15px; border-radius: 3px; background: #dc4444; color: #fff; line-height: 15px; }
.tray { display: flex; align-items: center; margin-left: auto; padding-right: 18px; }
.tray svg { width: 16px; height: 16px; }
.tray button { margin-left: 10px; }
.tray .lang { margin: 0 5px 0 17px; }
.tray .clock { text-align: right; margin-left: 12px; }
```
